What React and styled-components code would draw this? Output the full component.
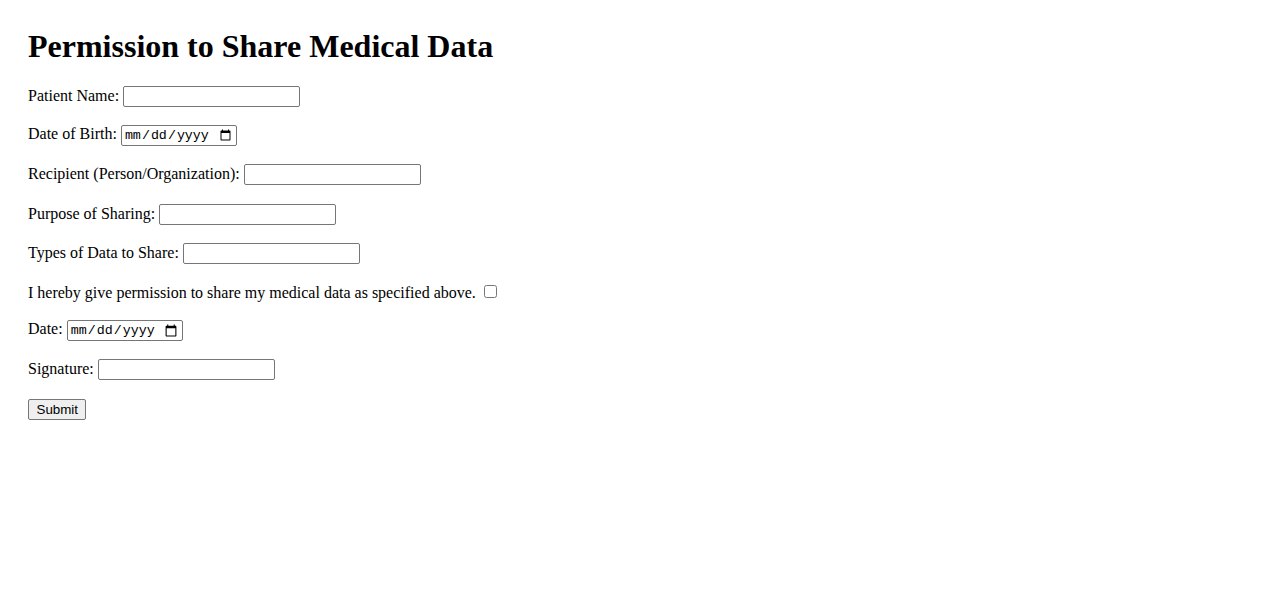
import React from "react";
import styled, { createGlobalStyle } from "styled-components";

const Global = createGlobalStyle`
  html, body { background: #fff; }
  body {
    margin: 8px;
    padding: 20px;
    font-family: "Liberation Serif", "Times New Roman", serif;
    font-size: 16px;
    color: #000;
  }
`;

const Title = styled.h1`
  font-family: "Liberation Serif", "Times New Roman", serif;
  font-size: 32px;
  font-weight: bold;
  margin: 0 0 21px;
`;

const Form = styled.form`
  display: block;
`;

const Row = styled.div`
  margin: 0 0 18.2px;
  line-height: normal;
`;

const Label = styled.label`
  font-size: 16px;
`;

const TextInput = styled.input`
  box-sizing: border-box;
  width: ${(p) => (p.type === "date" ? "116px" : "177px")};
  height: 21px;
  padding: 1px 2px;
  border: 1px solid #767676;
  border-radius: 2px;
  background: #fff;
  font-family: ${(p) =>
    p.type === "date" ? '"Liberation Mono", monospace' : '"Liberation Sans", Arial, sans-serif'};
  font-size: 13.33px;
  color: #000;
  vertical-align: baseline;
`;

const Check = styled.input`
  width: 13px;
  height: 13px;
  margin: 3px 3px 3px 4px;
  vertical-align: baseline;
`;

const Button = styled.button`
  box-sizing: border-box;
  height: 21px;
  padding: 1px 7.5px;
  border: 1px solid #767676;
  border-radius: 2px;
  background: #efefef;
  font-family: "Liberation Sans", Arial, sans-serif;
  font-size: 13.33px;
  color: #000;
`;

const fields = [
  { id: "name", label: "Patient Name:", type: "text" },
  { id: "dob", label: "Date of Birth:", type: "date" },
  { id: "recipient", label: "Recipient (Person/Organization):", type: "text" },
  { id: "purpose", label: "Purpose of Sharing:", type: "text" },
  { id: "types", label: "Types of Data to Share:", type: "text" },
];

export default function App() {
  return (
    <>
      <Global />
      <Title>Permission to Share Medical Data</Title>
      <Form onSubmit={(e) => e.preventDefault()}>
        {fields.map((f) => (
          <Row key={f.id}>
            <Label htmlFor={f.id}>{f.label}</Label> <TextInput id={f.id} type={f.type} />
          </Row>
        ))}
        <Row>
          <Label htmlFor="consent">
            I hereby give permission to share my medical data as specified above.
          </Label>{" "}
          <Check id="consent" type="checkbox" />
        </Row>
        <Row>
          <Label htmlFor="date">Date:</Label> <TextInput id="date" type="date" />
        </Row>
        <Row>
          <Label htmlFor="sig">Signature:</Label> <TextInput id="sig" type="text" />
        </Row>
        <Row>
          <Button type="submit">Submit</Button>
        </Row>
      </Form>
    </>
  );
}
